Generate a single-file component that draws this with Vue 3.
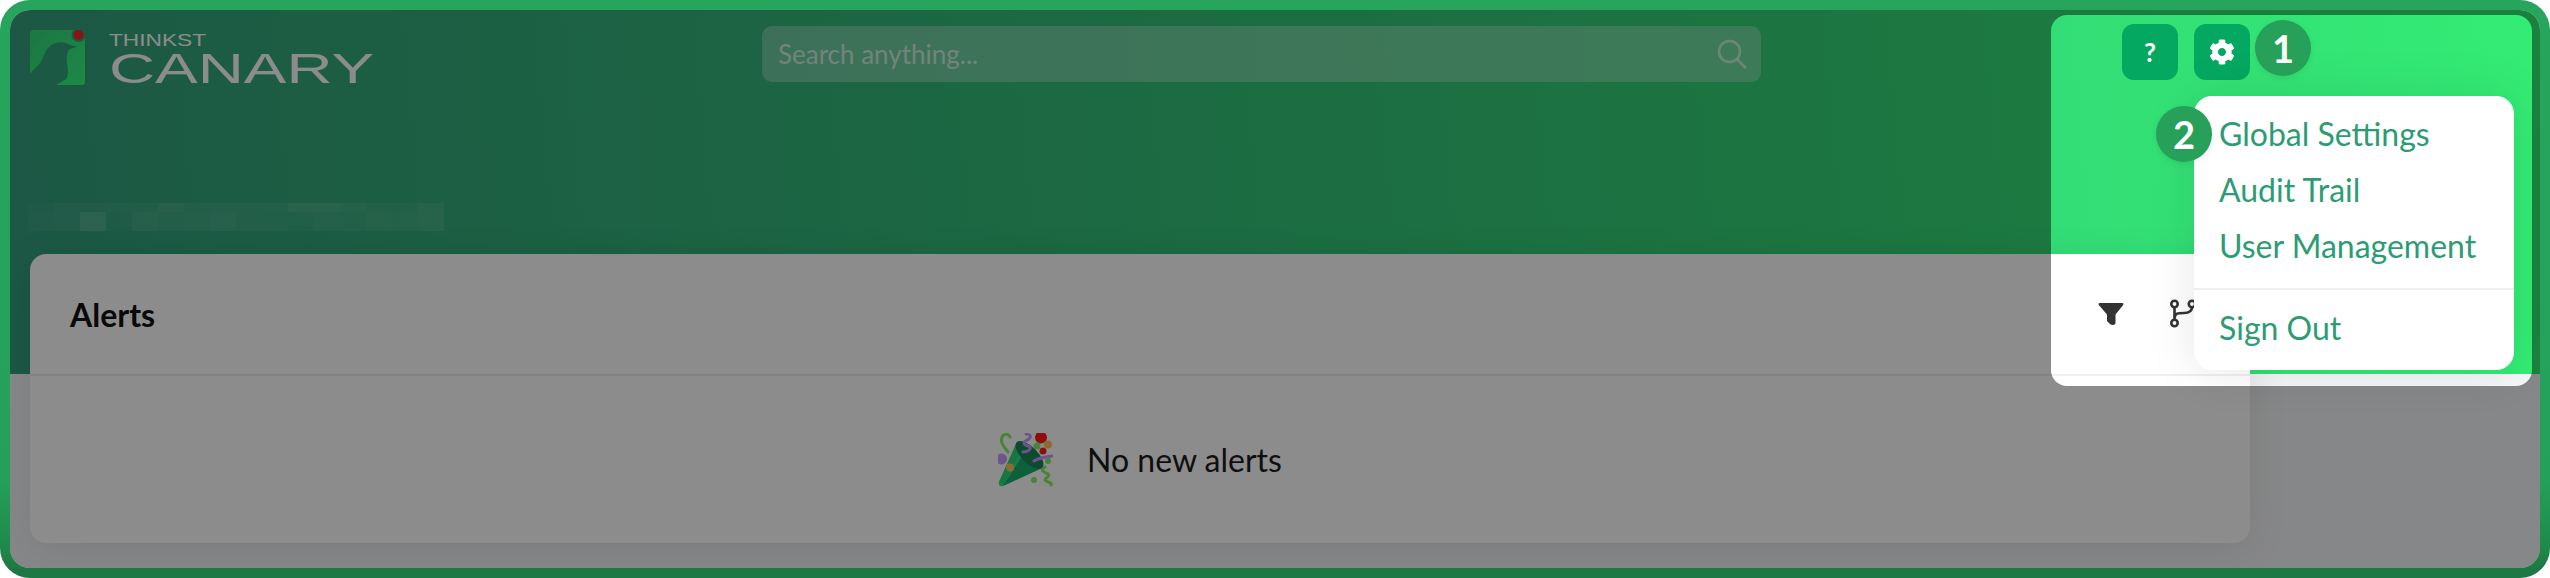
<template>
  <div class="frame">
    <div class="screen">
      <header class="hero">
        <div class="topbar">
          <svg class="logo" width="360" height="60" viewBox="0 0 360 60">
            <rect x="0" y="0" width="55" height="55" rx="3" fill="url(#logoGrad)" />
            <path d="M0 44 L10 33 C14 27 15 20 20 16 C24 12 33 11 38 14 L47 17 L40 19 C37 22 36 27 37 33 C38 40 39 45 36 49 L26 55 H0Z" fill="#33a27d" />
            <circle cx="48.5" cy="5" r="7" fill="#33a27d" />
            <circle cx="48.5" cy="5" r="5" fill="#ff2424" />
            <text x="79" y="15.5" class="logo-small" textLength="97" lengthAdjust="spacingAndGlyphs">THINKST</text>
            <text x="79" y="53" class="logo-big" textLength="265" lengthAdjust="spacingAndGlyphs">CANARY</text>
            <defs>
              <linearGradient id="logoGrad" x1="0" y1="0" x2="1" y2="1">
                <stop offset="0" stop-color="#35d87a" />
                <stop offset="1" stop-color="#33fb80" />
              </linearGradient>
            </defs>
          </svg>
          <div class="search">
            <span class="search-text">Search anything...</span>
            <svg width="30" height="30" viewBox="0 0 30 30" fill="none" stroke="#fff" stroke-opacity=".6" stroke-width="2.6" stroke-linecap="round">
              <circle cx="12.5" cy="12.5" r="10.5" />
              <path d="M20.5 20.5 L28 28.5" />
            </svg>
          </div>
          <div class="actions">
            <button class="icon-btn">?</button>
            <button class="icon-btn">
              <svg width="26" height="26" viewBox="0 0 512 512" fill="#fff">
                <path d="M487.4 315.7l-42.6-24.6c4.3-23.2 4.3-47 0-70.2l42.6-24.6c4.9-2.8 7.1-8.6 5.5-14-11.1-35.6-30-67.8-54.7-94.6-3.8-4.1-10-5.1-14.8-2.3L380.8 110c-17.9-15.4-38.5-27.3-60.8-35.1V25.8c0-5.6-3.9-10.5-9.4-11.7-36.7-8.2-74.3-7.8-109.2 0-5.5 1.2-9.4 6.1-9.4 11.7V75c-22.2 7.9-42.8 19.8-60.8 35.1L88.7 85.5c-4.9-2.8-11-1.9-14.8 2.3-24.7 26.7-43.6 58.9-54.7 94.6-1.7 5.4.6 11.2 5.5 14L67.3 221c-4.3 23.2-4.3 47 0 70.2l-42.6 24.6c-4.9 2.8-7.1 8.6-5.5 14 11.1 35.6 30 67.8 54.7 94.6 3.8 4.1 10 5.1 14.8 2.3l42.6-24.6c17.9 15.4 38.5 27.3 60.8 35.1v49.2c0 5.6 3.9 10.5 9.4 11.7 36.7 8.2 74.3 7.8 109.2 0 5.5-1.2 9.4-6.1 9.4-11.7v-49.2c22.2-7.9 42.8-19.8 60.8-35.1l42.6 24.6c4.9 2.8 11 1.9 14.8-2.3 24.7-26.7 43.6-58.9 54.7-94.6 1.5-5.5-.7-11.3-5.6-14.1zM256 336c-44.1 0-80-35.9-80-80s35.9-80 80-80 80 35.9 80 80-35.9 80-80 80z" />
              </svg>
            </button>
          </div>
        </div>
        <div class="mosaic">
          <i v-for="(a, i) in mosaic" :key="i" :style="{ background: `rgba(255,255,255,${a})` }"></i>
        </div>
      </header>

      <section class="card">
        <div class="card-head">
          <h2>Alerts</h2>
          <div class="tools">
            <svg width="26" height="22" viewBox="0 0 26 22" fill="#333">
              <path d="M1.5 0 H24.5 Q26 0 25.2 2 L17.5 11.5 V20 Q17.5 22 15 22 Q13 22 12 21 L9 18 V11.5 L.8 2 Q0 0 1.5 0Z" />
            </svg>
            <svg width="30" height="30" viewBox="0 0 30 30" fill="none" stroke="#333" stroke-width="2.6">
              <circle cx="4.5" cy="5" r="3.2" />
              <circle cx="4.5" cy="24" r="3.2" />
              <circle cx="22" cy="5" r="3.2" />
              <path d="M4.5 8 V21 M4.5 19 C5 14 8 14 14 14 C19 14 22 12 22 8" />
            </svg>
          </div>
        </div>
        <div class="card-body">
          <svg width="55" height="54" viewBox="0 0 55 54" fill="none">
            <path d="M1 49 L19 9 L44 35 L5 53 Q0 54 1 49Z" fill="#33e787" />
            <path d="M5 53 L28 17 L44 35Z" fill="#1bad6d" />
            <path d="M1 49 L19 9 L24 14 L6 52Z" fill="#2fd67c" />
            <ellipse cx="31.5" cy="22" rx="18" ry="8" transform="rotate(45 31.5 22)" fill="#188758" />
            <path d="M10 19 C6 14 2 10 4 4 C6 0 11 1 12 4" stroke="#87ed66" stroke-width="3" stroke-linecap="round" />
            <path d="M28 1 C33 1 34 5 29 7 C25 9 25 12 30 13 C34 14 33 18 25 19" stroke="#c69bff" stroke-width="3" stroke-linecap="round" />
            <path d="M36 28 C40 25 47 24 54 23" stroke="#c69bff" stroke-width="3" stroke-linecap="round" />
            <path d="M47 34 C42 37 45 39 50 41 C54 43 44 46 48 48 C52 50 54 50 53 52" stroke="#87ed66" stroke-width="3" stroke-linecap="round" />
            <circle cx="43" cy="4.5" r="6" fill="#ff1b1b" />
            <circle cx="50" cy="11.5" r="4" fill="#ffc457" />
            <circle cx="39" cy="13" r="3.5" fill="#87ed66" />
            <circle cx="45" cy="18" r="3.5" fill="#ff1b1b" />
            <circle cx="50" cy="28" r="3" fill="#87ed66" />
            <circle cx="3.5" cy="26" r="5.5" fill="#c69bff" />
            <circle cx="12" cy="34.5" r="4" fill="#ffc457" />
            <circle cx="36" cy="47" r="3" fill="#87ed66" />
          </svg>
          <span>No new alerts</span>
        </div>
      </section>

      <div class="spotlight"></div>

      <nav class="menu">
        <a v-for="item in menuItems" :key="item">{{ item }}</a>
        <hr />
        <a>Sign Out</a>
      </nav>
      <span class="step step-one">1</span>
      <span class="step step-two">2</span>
    </div>
  </div>
</template>

<script setup>
const menuItems = ['Global Settings', 'Audit Trail', 'User Management']

// pixelated (redacted) line under the header
const mosaic = [
  0.03, 0.06, 0.06, 0.06, 0.06, 0.12, 0.06, 0.07, 0.06, 0.07, 0.12, 0.12, 0.09, 0.06, 0.06, 0.1,
  0.05, 0.06, 0.16, 0.03, 0.09, 0.07, 0.08, 0.1, 0.06, 0.06, 0.05, 0.08, 0.07, 0.09, 0.08, 0.1,
]
</script>

<style>
html,
body {
  background: #fff;
}
</style>

<style scoped>
.frame {
  width: 2550px;
  height: 578px;
  box-sizing: border-box;
  padding: 10px;
  border-radius: 30px;
  background: linear-gradient(180deg, #27a55d 0%, #24a05a 83%, #1f8b4d 94%, #1d7943 98.5%);
  font-family: Lato, "Open Sans", sans-serif;
}

.screen {
  position: relative;
  height: 558px;
  overflow: hidden;
  border-radius: 20px;
  background: #f5f6f8;
}

.hero {
  height: 364px;
  box-sizing: border-box;
  padding-top: 16px;
  display: flex;
  flex-direction: column;
  background: linear-gradient(85deg, #33a07e 0%, #33ec74 100%);
}

.topbar {
  display: grid;
  grid-template-columns: 732px 999px 1fr;
  padding-left: 20px;
}

.logo-small {
  font: 400 17px "Liberation Sans", sans-serif;
  fill: #fff;
}

.logo-big {
  font: 400 42px "Liberation Sans", sans-serif;
  fill: #fff;
}

.logo {
  margin-top: 4px;
}

.search {
  height: 56px;
  box-sizing: border-box;
  padding: 0 14px 0 16px;
  display: flex;
  align-items: center;
  justify-content: space-between;
  border-radius: 10px;
  background: rgba(255, 255, 255, 0.3);
}

.search-text {
  font-size: 26px;
  color: rgba(255, 255, 255, 0.7);
}

.actions {
  display: flex;
  gap: 16px;
  padding-left: 361px;
  margin-top: -2px;
}

.icon-btn {
  width: 56px;
  height: 56px;
  padding: 0;
  display: flex;
  align-items: center;
  justify-content: center;
  border: 0;
  border-radius: 12px;
  background: #05a861;
  color: #fff;
  font: 700 26px Lato, sans-serif;
}

.mosaic {
  display: grid;
  grid-template-columns: repeat(16, 26px);
  grid-template-rows: 9px 19px;
  margin: 113px 0 0 18px;
}

.card {
  position: relative;
  width: 2220px;
  margin: -120px 0 0 20px;
  border-radius: 16px;
  background: #fff;
  box-shadow: 0 6px 40px rgba(0, 0, 0, 0.09);
}

.card-head {
  height: 120px;
  display: flex;
  align-items: center;
  justify-content: space-between;
  padding: 0 50px 0 40px;
  border-bottom: 2px solid #efefef;
}

.card-head h2 {
  margin: 0;
  font-size: 32px;
  font-weight: 700;
  color: #111;
}

.tools {
  display: flex;
  align-items: center;
  gap: 46px;
}

.card-body {
  height: 167px;
  display: flex;
  align-items: center;
  justify-content: center;
  gap: 34px;
  font-size: 32px;
  color: #1c1c1c;
  padding-right: 0;
}

.spotlight {
  position: absolute;
  left: 2041px;
  top: 5px;
  width: 481px;
  height: 371px;
  border-radius: 16px;
  box-shadow: 0 0 0 3000px rgba(0, 0, 0, 0.45);
  pointer-events: none;
}

.menu {
  position: absolute;
  left: 2184px;
  top: 86px;
  width: 320px;
  box-sizing: border-box;
  padding: 10px 0 14px;
  display: flex;
  flex-direction: column;
  border-radius: 18px;
  background: #fff;
  box-shadow: 0 0 50px rgba(0, 0, 0, 0.1);
  color: #2d9c74;
  font-size: 32px;
  line-height: 56px;
}

.menu a {
  padding-left: 25px;
}

.menu hr {
  margin: 14px 0 10px;
  height: 2px;
  border: 0;
  background: #efefef;
}

.step {
  position: absolute;
  width: 56px;
  height: 56px;
  display: flex;
  align-items: center;
  justify-content: center;
  border-radius: 50%;
  background: #27a05a;
  color: #fff;
  font-size: 38px;
  font-weight: 700;
  box-shadow: 0 2px 6px rgba(0, 0, 0, 0.08);
}

.step-one {
  left: 2245px;
  top: 10px;
}

.step-two {
  left: 2146px;
  top: 96px;
}
</style>
